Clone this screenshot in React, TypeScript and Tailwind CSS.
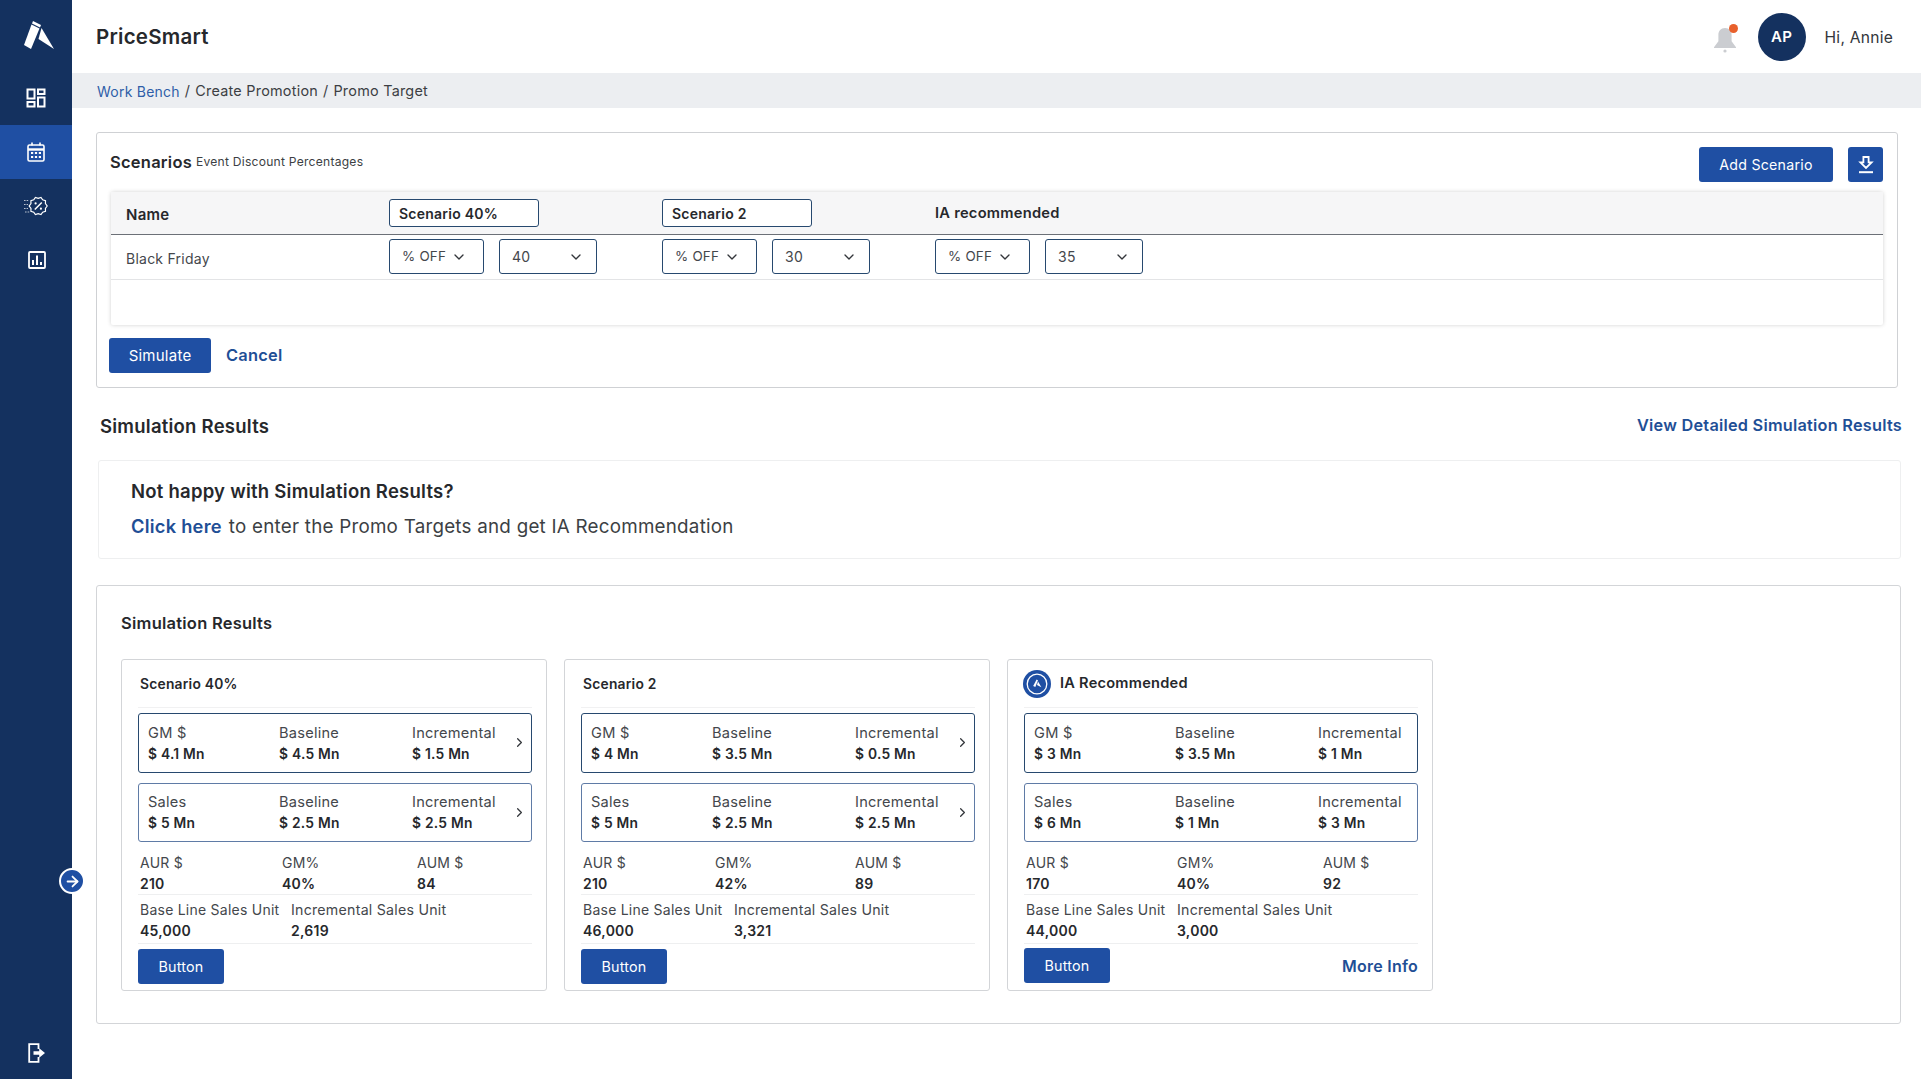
import { ArrowRight, ChevronDown, ChevronRight } from "lucide-react"

type Metric = { name: string; value: string; base: string; inc: string }

type Scenario = {
  title: string
  metricCols: string
  statCols: string
  metrics: Metric[]
  stats: { label: string; value: string }[]
  baseUnit: string
  incUnit: string
  ia?: boolean
}

const scenarios: Scenario[] = [
  {
    title: "Scenario 40%",
    metricCols: "grid-cols-[131px_133px_1fr]",
    statCols: "grid-cols-[142px_135px_1fr]",
    metrics: [
      { name: "GM $", value: "$ 4.1 Mn", base: "$ 4.5 Mn", inc: "$ 1.5 Mn" },
      { name: "Sales", value: "$ 5 Mn", base: "$ 2.5 Mn", inc: "$ 2.5 Mn" },
    ],
    stats: [
      { label: "AUR $", value: "210" },
      { label: "GM%", value: "40%" },
      { label: "AUM $", value: "84" },
    ],
    baseUnit: "45,000",
    incUnit: "2,619",
  },
  {
    title: "Scenario 2",
    metricCols: "grid-cols-[121px_143px_1fr]",
    statCols: "grid-cols-[132px_140px_1fr]",
    metrics: [
      { name: "GM $", value: "$ 4 Mn", base: "$ 3.5 Mn", inc: "$ 0.5 Mn" },
      { name: "Sales", value: "$ 5 Mn", base: "$ 2.5 Mn", inc: "$ 2.5 Mn" },
    ],
    stats: [
      { label: "AUR $", value: "210" },
      { label: "GM%", value: "42%" },
      { label: "AUM $", value: "89" },
    ],
    baseUnit: "46,000",
    incUnit: "3,321",
  },
  {
    title: "IA Recommended",
    metricCols: "grid-cols-[141px_143px_1fr]",
    statCols: "grid-cols-[151px_146px_1fr]",
    metrics: [
      { name: "GM $", value: "$ 3 Mn", base: "$ 3.5 Mn", inc: "$ 1 Mn" },
      { name: "Sales", value: "$ 6 Mn", base: "$ 1 Mn", inc: "$ 3 Mn" },
    ],
    stats: [
      { label: "AUR $", value: "170" },
      { label: "GM%", value: "40%" },
      { label: "AUM $", value: "92" },
    ],
    baseUnit: "44,000",
    incUnit: "3,000",
    ia: true,
  },
]

function LogoMark() {
  return (
    <svg width="32" height="32" viewBox="0 0 32 32" fill="#fff">
      <polygon points="11,3 19,7 18,9.5 10,5.5" />
      <polygon points="9.5,6.5 17.5,10.5 9,31 2,27" />
      <polygon points="19.5,10 32,31 16.5,21" />
    </svg>
  )
}

function DashboardIcon() {
  return (
    <svg width="20" height="20" viewBox="0 0 20 20" fill="none" stroke="#fff" strokeWidth="2">
      <rect x="1.5" y="1.5" width="7" height="9" />
      <rect x="12" y="1.5" width="6.5" height="4.5" />
      <rect x="12" y="9.5" width="6.5" height="9" />
      <rect x="1.5" y="14" width="7" height="4.5" />
    </svg>
  )
}

function CalendarIcon() {
  return (
    <svg width="18" height="20" viewBox="0 0 18 20" fill="none" stroke="#fff" strokeWidth="1.6">
      <rect x="1" y="3" width="16" height="16" rx="1.5" />
      <path d="M1 7.5h16" strokeWidth="2.4" />
      <path d="M5 0.5v3M13 0.5v3" />
      <g fill="#fff" stroke="none">
        <rect x="4" y="10" width="2.2" height="2" />
        <rect x="7.9" y="10" width="2.2" height="2" />
        <rect x="11.8" y="10" width="2.2" height="2" />
        <rect x="4" y="14" width="2.2" height="2" />
        <rect x="7.9" y="14" width="2.2" height="2" />
        <rect x="11.8" y="14" width="2.2" height="2" />
      </g>
    </svg>
  )
}

// jagged badge outline for the promo icon
function badgePoints(cx: number, cy: number) {
  const pts: string[] = []
  for (let i = 0; i < 20; i++) {
    const r = i % 2 === 0 ? 9 : 7.6
    const a = (Math.PI * i) / 10
    pts.push(`${(cx + r * Math.cos(a)).toFixed(2)},${(cy + r * Math.sin(a)).toFixed(2)}`)
  }
  return pts.join(" ")
}

function PromoIcon() {
  return (
    <svg width="24" height="20" viewBox="0 0 24 20" fill="none" stroke="#fff" strokeWidth="1.2">
      <polygon points={badgePoints(14.2, 10)} />
      <path d="M10.8 13.6l7-7.2" strokeWidth="1.5" />
      <circle cx="11.6" cy="7.4" r="1.1" fill="#fff" stroke="none" />
      <circle cx="16.9" cy="12.7" r="1.1" fill="#fff" stroke="none" />
      <path d="M0 4.5h5M0 8.5h4M0 12.5h4M1 16h5" strokeOpacity="0.7" strokeDasharray="1.6 1" />
    </svg>
  )
}

function ChartIcon() {
  return (
    <svg width="18" height="18" viewBox="0 0 18 18" fill="none" stroke="#fff">
      <rect x="1" y="1" width="16" height="16" rx="1" strokeWidth="1.8" />
      <path d="M5 14V9M9 14V4.5M13 14v-3" strokeWidth="2" />
    </svg>
  )
}

function LogoutIcon() {
  return (
    <svg width="18" height="20" viewBox="0 0 18 20" fill="none">
      <path d="M10.5 6V1.2H1.2v17.6h9.3V14" stroke="#fff" strokeWidth="1.8" />
      <path d="M5.5 8.2h5.7V5.2L17 10l-5.8 4.8v-3H5.5z" fill="#fff" />
    </svg>
  )
}

function BellIcon() {
  return (
    <svg width="24" height="26" viewBox="0 0 24 26" fill="#cbcdd1">
      <path d="M12 1c-4.2 0-6.6 3-6.6 7v6.2L1 20.2v.8h22v-.8l-4.4-6V8c0-4-2.4-7-6.6-7z" />
      <circle cx="12" cy="24" r="1.6" />
    </svg>
  )
}

function DownloadIcon() {
  return (
    <svg width="16" height="18" viewBox="0 0 16 18" fill="none" stroke="#fff">
      <path d="M5.4 1h5.2v5.4h3L8 12 2.4 6.4h3z" strokeWidth="1.8" />
      <path d="M1 16.2h14" strokeWidth="2" />
    </svg>
  )
}

function IaBadge() {
  return (
    <svg width="28" height="28" viewBox="0 0 28 28">
      <circle cx="14" cy="14" r="14" fill="#1f4fa3" />
      <circle cx="14" cy="14" r="9.8" fill="#1f4fa3" stroke="#fff" strokeWidth="1.3" />
      <polygon points="13.6,9.5 15,10.2 12.3,17 10.2,16" fill="#fff" />
      <polygon points="15,11.6 18.4,17.2 14,15" fill="#fff" />
    </svg>
  )
}

function Sidebar() {
  return (
    <aside className="relative flex w-[72px] shrink-0 flex-col bg-[#14315f]">
      <div className="flex h-[71px] items-center justify-center pb-[3px] pl-[4px]">
        <LogoMark />
      </div>
      <div className="flex h-[54px] items-center justify-center">
        <DashboardIcon />
      </div>
      <div className="flex h-[54px] items-center justify-center bg-[#1f4fa3]">
        <CalendarIcon />
      </div>
      <div className="flex h-[54px] items-center justify-center">
        <PromoIcon />
      </div>
      <div className="flex h-[54px] items-center justify-center pl-[2px]">
        <ChartIcon />
      </div>
      <div className="mt-auto flex h-[52px] items-center justify-center pl-[2px]">
        <LogoutIcon />
      </div>
      <div className="absolute left-[59px] top-[868px] flex h-[26px] w-[26px] items-center justify-center rounded-full border-2 border-white bg-[#1f4fa3]">
        <ArrowRight size={17} color="#fff" strokeWidth={2.5} />
      </div>
    </aside>
  )
}

function Select({ value, className }: { value: string; className: string }) {
  return (
    <div
      className={`flex h-[35px] items-center justify-between rounded-[3px] border border-[#27496f] pl-[12px] text-[#44474c] ${className}`}
    >
      <span>{value}</span>
      <ChevronDown size={16} color="#33363b" strokeWidth={2} />
    </div>
  )
}

function NameInput({ value }: { value: string }) {
  return (
    <div className="flex h-[28px] w-[150px] items-center rounded-[3px] border border-[#27496f] bg-white pl-[9px] text-[14px] font-semibold text-[#26282c]">
      {value}
    </div>
  )
}

function SelectPair({ value }: { value: string }) {
  return (
    <div className="flex gap-[15px]">
      <Select value="% OFF" className="w-[95px] pr-[16px] text-[13.4px]" />
      <Select value={value} className="w-[98px] pr-[12px] text-[14px]" />
    </div>
  )
}

function ScenariosPanel() {
  return (
    <section className="ml-[24px] mr-[23px] mt-[24px] rounded-[3px] border border-[#cfd1d4] pb-[14px] pl-[12px] pr-[14px] pt-[14px]">
      <div className="ml-px flex h-[35px] items-start justify-between">
        <div className="flex items-center gap-[4px] pt-[3px]">
          <span className="text-[16.5px] font-semibold text-[#26282c]">Scenarios</span>
          <span className="text-[12.1px] text-[#3c3f44]">Event Discount Percentages</span>
        </div>
        <div className="flex gap-[15px]">
          <button className="h-[35px] w-[134px] rounded-[3px] bg-[#1f4fa3] pt-[1px] text-[14.2px] text-white">
            Add Scenario
          </button>
          <button className="flex h-[35px] w-[35px] items-center justify-center rounded-[3px] bg-[#1f4fa3]">
            <DownloadIcon />
          </button>
        </div>
      </div>

      <div className="ml-[2px] mt-[10px] rounded-[2px] shadow-[0_0_4px_rgba(0,0,0,0.18)]">
        <div className="grid h-[43px] grid-cols-[278px_273px_273px_1fr] border-b border-[#6c7077] bg-[#f6f6f7] pt-[7px]">
          <div className="pl-[15px] pt-[5px] text-[15px] font-semibold text-[#26282c]">Name</div>
          <NameInput value="Scenario 40%" />
          <NameInput value="Scenario 2" />
          <div className="pt-[4px] text-[14.7px] font-semibold leading-[20px] text-[#26282c]">IA recommended</div>
        </div>
        <div className="grid h-[45px] grid-cols-[278px_273px_273px_1fr] border-b border-[#e3e4e6] pt-[4px]">
          <div className="pl-[15px] pt-[9px] text-[14px] text-[#44474c]">Black Friday</div>
          <SelectPair value="40" />
          <SelectPair value="30" />
          <SelectPair value="35" />
        </div>
        <div className="h-[45px]" />
      </div>

      <div className="mt-[13px] flex items-center gap-[15px]">
        <button className="h-[35px] w-[102px] rounded-[3px] bg-[#1f4fa3] pt-[2px] text-[15px] text-white">
          Simulate
        </button>
        <span className="text-[16.4px] font-semibold text-[#1f4f96]">Cancel</span>
      </div>
    </section>
  )
}

function MetricBox({ metric, cols, chevron, soft }: { metric: Metric; cols: string; chevron: boolean; soft: boolean }) {
  return (
    <div
      className={`relative grid items-center rounded-[3px] border pl-[9px] pt-[1px] leading-[21px] ${cols} ${
        soft ? "h-[59px] border-[#5f7ba6]" : "h-[60px] border-[#27496f]"
      }`}
    >
      <div>
        <div className="text-[14.6px] text-[#44474c]">{metric.name}</div>
        <div className="text-[13.8px] font-semibold text-[#26282c]">{metric.value}</div>
      </div>
      <div>
        <div className="text-[14.6px] text-[#44474c]">Baseline</div>
        <div className="text-[13.8px] font-semibold text-[#26282c]">{metric.base}</div>
      </div>
      <div>
        <div className="text-[14.6px] text-[#44474c]">Incremental</div>
        <div className="text-[13.8px] font-semibold text-[#26282c]">{metric.inc}</div>
      </div>
      {chevron && (
        <ChevronRight size={15} color="#33363b" strokeWidth={2} className="absolute right-[4px] top-[21px]" />
      )}
    </div>
  )
}

function ScenarioCard({ data }: { data: Scenario }) {
  return (
    <div className="w-[426px] rounded-[3px] border border-[#d3d5d8] pl-[16px] pr-[14px]">
      <div className={`flex h-[48px] items-center border-b border-[#f1f1f2] pt-[1px] ${data.ia ? "" : "pl-[2px]"}`}>
        {data.ia && (
          <span className="ml-[-1px] mr-[9px]">
            <IaBadge />
          </span>
        )}
        <span className={`font-semibold text-[#26282c] ${data.ia ? "text-[14.6px]" : "text-[13.8px]"}`}>{data.title}</span>
      </div>
      <div className="mt-[5px] flex flex-col gap-[10px]">
        {data.metrics.map((m, i) => (
          <MetricBox key={m.name} metric={m} cols={data.metricCols} chevron={!data.ia} soft={i === 1} />
        ))}
      </div>
      <div className={`grid border-b border-[#eeeff0] pl-[2px] pt-[10px] text-[14px] leading-[21px] ${data.statCols}`}>
        {data.stats.map((s) => (
          <div key={s.label}>
            <div className="text-[#44474c]">{s.label}</div>
            <div className="font-semibold text-[#26282c]">{s.value}</div>
          </div>
        ))}
      </div>
      <div className="grid grid-cols-[151px_1fr] border-b border-[#eeeff0] pb-[2px] pl-[2px] pt-[4px] text-[14px] leading-[21px]">
        <div>
          <div className="whitespace-nowrap text-[#44474c]">Base Line Sales Unit</div>
          <div className="font-semibold text-[#26282c]">{data.baseUnit}</div>
        </div>
        <div>
          <div className="text-[14.2px] text-[#44474c]">Incremental Sales Unit</div>
          <div className="font-semibold text-[#26282c]">{data.incUnit}</div>
        </div>
      </div>
      <div className={`flex items-center justify-between ${data.ia ? "mt-[4px] pb-[7px]" : "mt-[5px] pb-[6px]"}`}>
        <button className="h-[35px] w-[86px] rounded-[3px] bg-[#1f4fa3] text-[14.3px] text-white">Button</button>
        {data.ia && <span className="text-[16px] font-semibold text-[#1f4f96]">More Info</span>}
      </div>
    </div>
  )
}

export default function App() {
  return (
    <div className="flex min-h-screen w-full bg-white font-['Inter',sans-serif] tracking-[0.015em]">
      <Sidebar />
      <main className="min-w-0 flex-1">
        <header className="flex h-[73px] items-center justify-between pl-[24px] pr-[28px]">
          <span className="pt-[1px] text-[20.5px] font-semibold text-[#26282c]">PriceSmart</span>
          <div className="flex items-center">
            <div className="relative mr-[21px] mt-[6px]">
              <BellIcon />
              <span className="absolute right-[-1px] top-[-3px] h-[9px] w-[9px] rounded-full bg-[#e8602c]" />
            </div>
            <div className="mt-[1px] flex h-[48px] w-[48px] items-center justify-center rounded-full bg-[#14315f] text-[15px] font-semibold text-white">
              AP
            </div>
            <span className="ml-[19px] mt-[3px] text-[15.6px] text-[#33363b]">Hi, Annie</span>
          </div>
        </header>

        <div className="flex h-[35px] items-center bg-[#eceef1] pl-[25px] pt-[1px] text-[14.4px] text-[#3c3f44]">
          <span className="text-[14px] text-[#2f5ea8]">Work Bench</span>
          <span className="mx-[5px]">/</span>
          <span>Create Promotion</span>
          <span className="mx-[5px]">/</span>
          <span>Promo Target</span>
        </div>

        <ScenariosPanel />

        <div className="ml-[28px] mr-[19px] mt-[24px] flex h-[28px] items-center justify-between">
          <span className="pt-[2px] text-[18.5px] font-semibold text-[#26282c]">Simulation Results</span>
          <span className="pb-[2px] text-[16.3px] font-semibold text-[#1f4f96]">View Detailed Simulation Results</span>
        </div>

        <section className="ml-[26px] mr-[20px] mt-[20px] h-[99px] rounded-[3px] border border-[#eeeff0] pl-[32px] pt-[16px]">
          <div className="text-[18.5px] font-semibold leading-[28px] text-[#26282c]">Not happy with Simulation Results?</div>
          <div className="mt-[7px] text-[18.8px] leading-[28px] text-[#3c3f44]">
            <span className="mr-[7px] text-[18.3px] font-semibold text-[#1f4f96]">Click here</span>
            to enter the Promo Targets and get IA Recommendation
          </div>
        </section>

        <section className="ml-[24px] mr-[20px] mt-[26px] h-[439px] rounded-[3px] border border-[#d3d5d8] pl-[24px]">
          <div className="flex h-[73px] items-center pt-[1px] text-[16.5px] font-semibold text-[#26282c]">Simulation Results</div>
          <div className="flex gap-[17px]">
            {scenarios.map((s) => (
              <ScenarioCard key={s.title} data={s} />
            ))}
          </div>
        </section>
      </main>
    </div>
  )
}
